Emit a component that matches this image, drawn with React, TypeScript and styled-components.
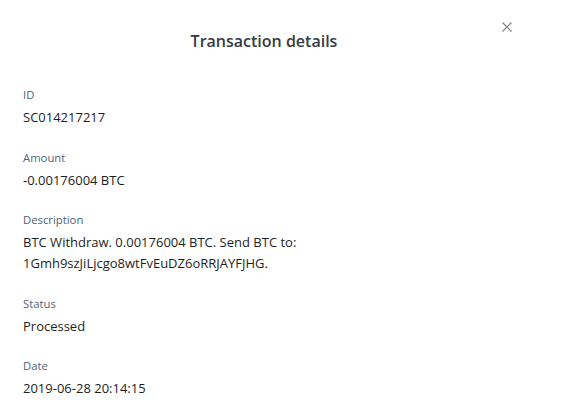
import React from 'react';
import styled, { createGlobalStyle } from 'styled-components';

const GlobalStyle = createGlobalStyle`
   body {
      margin: 0;
      background: #fff;
      font-family: 'Open Sans', 'Noto Sans', sans-serif;
   }
`;

type FieldType = {
   label: string;
   value: string;
};

const fields: FieldType[] = [
   { label: 'ID', value: 'SC014217217' },
   { label: 'Amount', value: '-0.00176004 BTC' },
   {
      label: 'Description',
      value: 'BTC Withdraw. 0.00176004 BTC. Send BTC to: 1Gmh9szJiLjcgo8wtFvEuDZ6oRRJAYFJHG.',
   },
   { label: 'Status', value: 'Processed' },
   { label: 'Date', value: '2019-06-28 20:14:15' },
];

const CloseIcon = () => (
   <svg width="10" height="10" viewBox="0 0 10 10" fill="none">
      <path d="M0.5 0.5L9.5 9.5M9.5 0.5L0.5 9.5" stroke="currentColor" strokeWidth="1.2" />
   </svg>
);

export default function App() {
   return (
      <>
         <GlobalStyle />
         <Modal>
            <Header>
               <Title>Transaction details</Title>
               <CloseButton aria-label="close">
                  <CloseIcon />
               </CloseButton>
            </Header>
            <FieldList>
               {fields.map((f) => (
                  <Field key={f.label}>
                     <Label>{f.label}</Label>
                     <Value>{f.value}</Value>
                  </Field>
               ))}
            </FieldList>
         </Modal>
      </>
   );
}

const Modal = styled.div`
   width: 528px;
   box-sizing: border-box;
   padding: 0 23px;
`;

const Header = styled.div`
   position: relative;
   padding-top: 30px;
`;

const Title = styled.h2`
   margin: 0;
   text-align: center;
   font-size: 16px;
   line-height: 22px;
   font-weight: 600;
   color: #343b45;
`;

const CloseButton = styled.button`
   position: absolute;
   top: 22px;
   right: -7px;
   padding: 0;
   border: none;
   background: none;
   color: #808080;
   display: flex;
   cursor: pointer;
`;

const FieldList = styled.div`
   display: flex;
   flex-direction: column;
   gap: 20.5px;
   margin-top: 34px;
`;

const Field = styled.div`
   display: flex;
   flex-direction: column;
   gap: 3px;
`;

const Label = styled.span`
   font-size: 11.3px;
   line-height: 18px;
   color: #50647a;
`;

const Value = styled.span`
   font-size: 13px;
   line-height: 21px;
   color: #1e1e1e;
   max-width: 420px;
`;
